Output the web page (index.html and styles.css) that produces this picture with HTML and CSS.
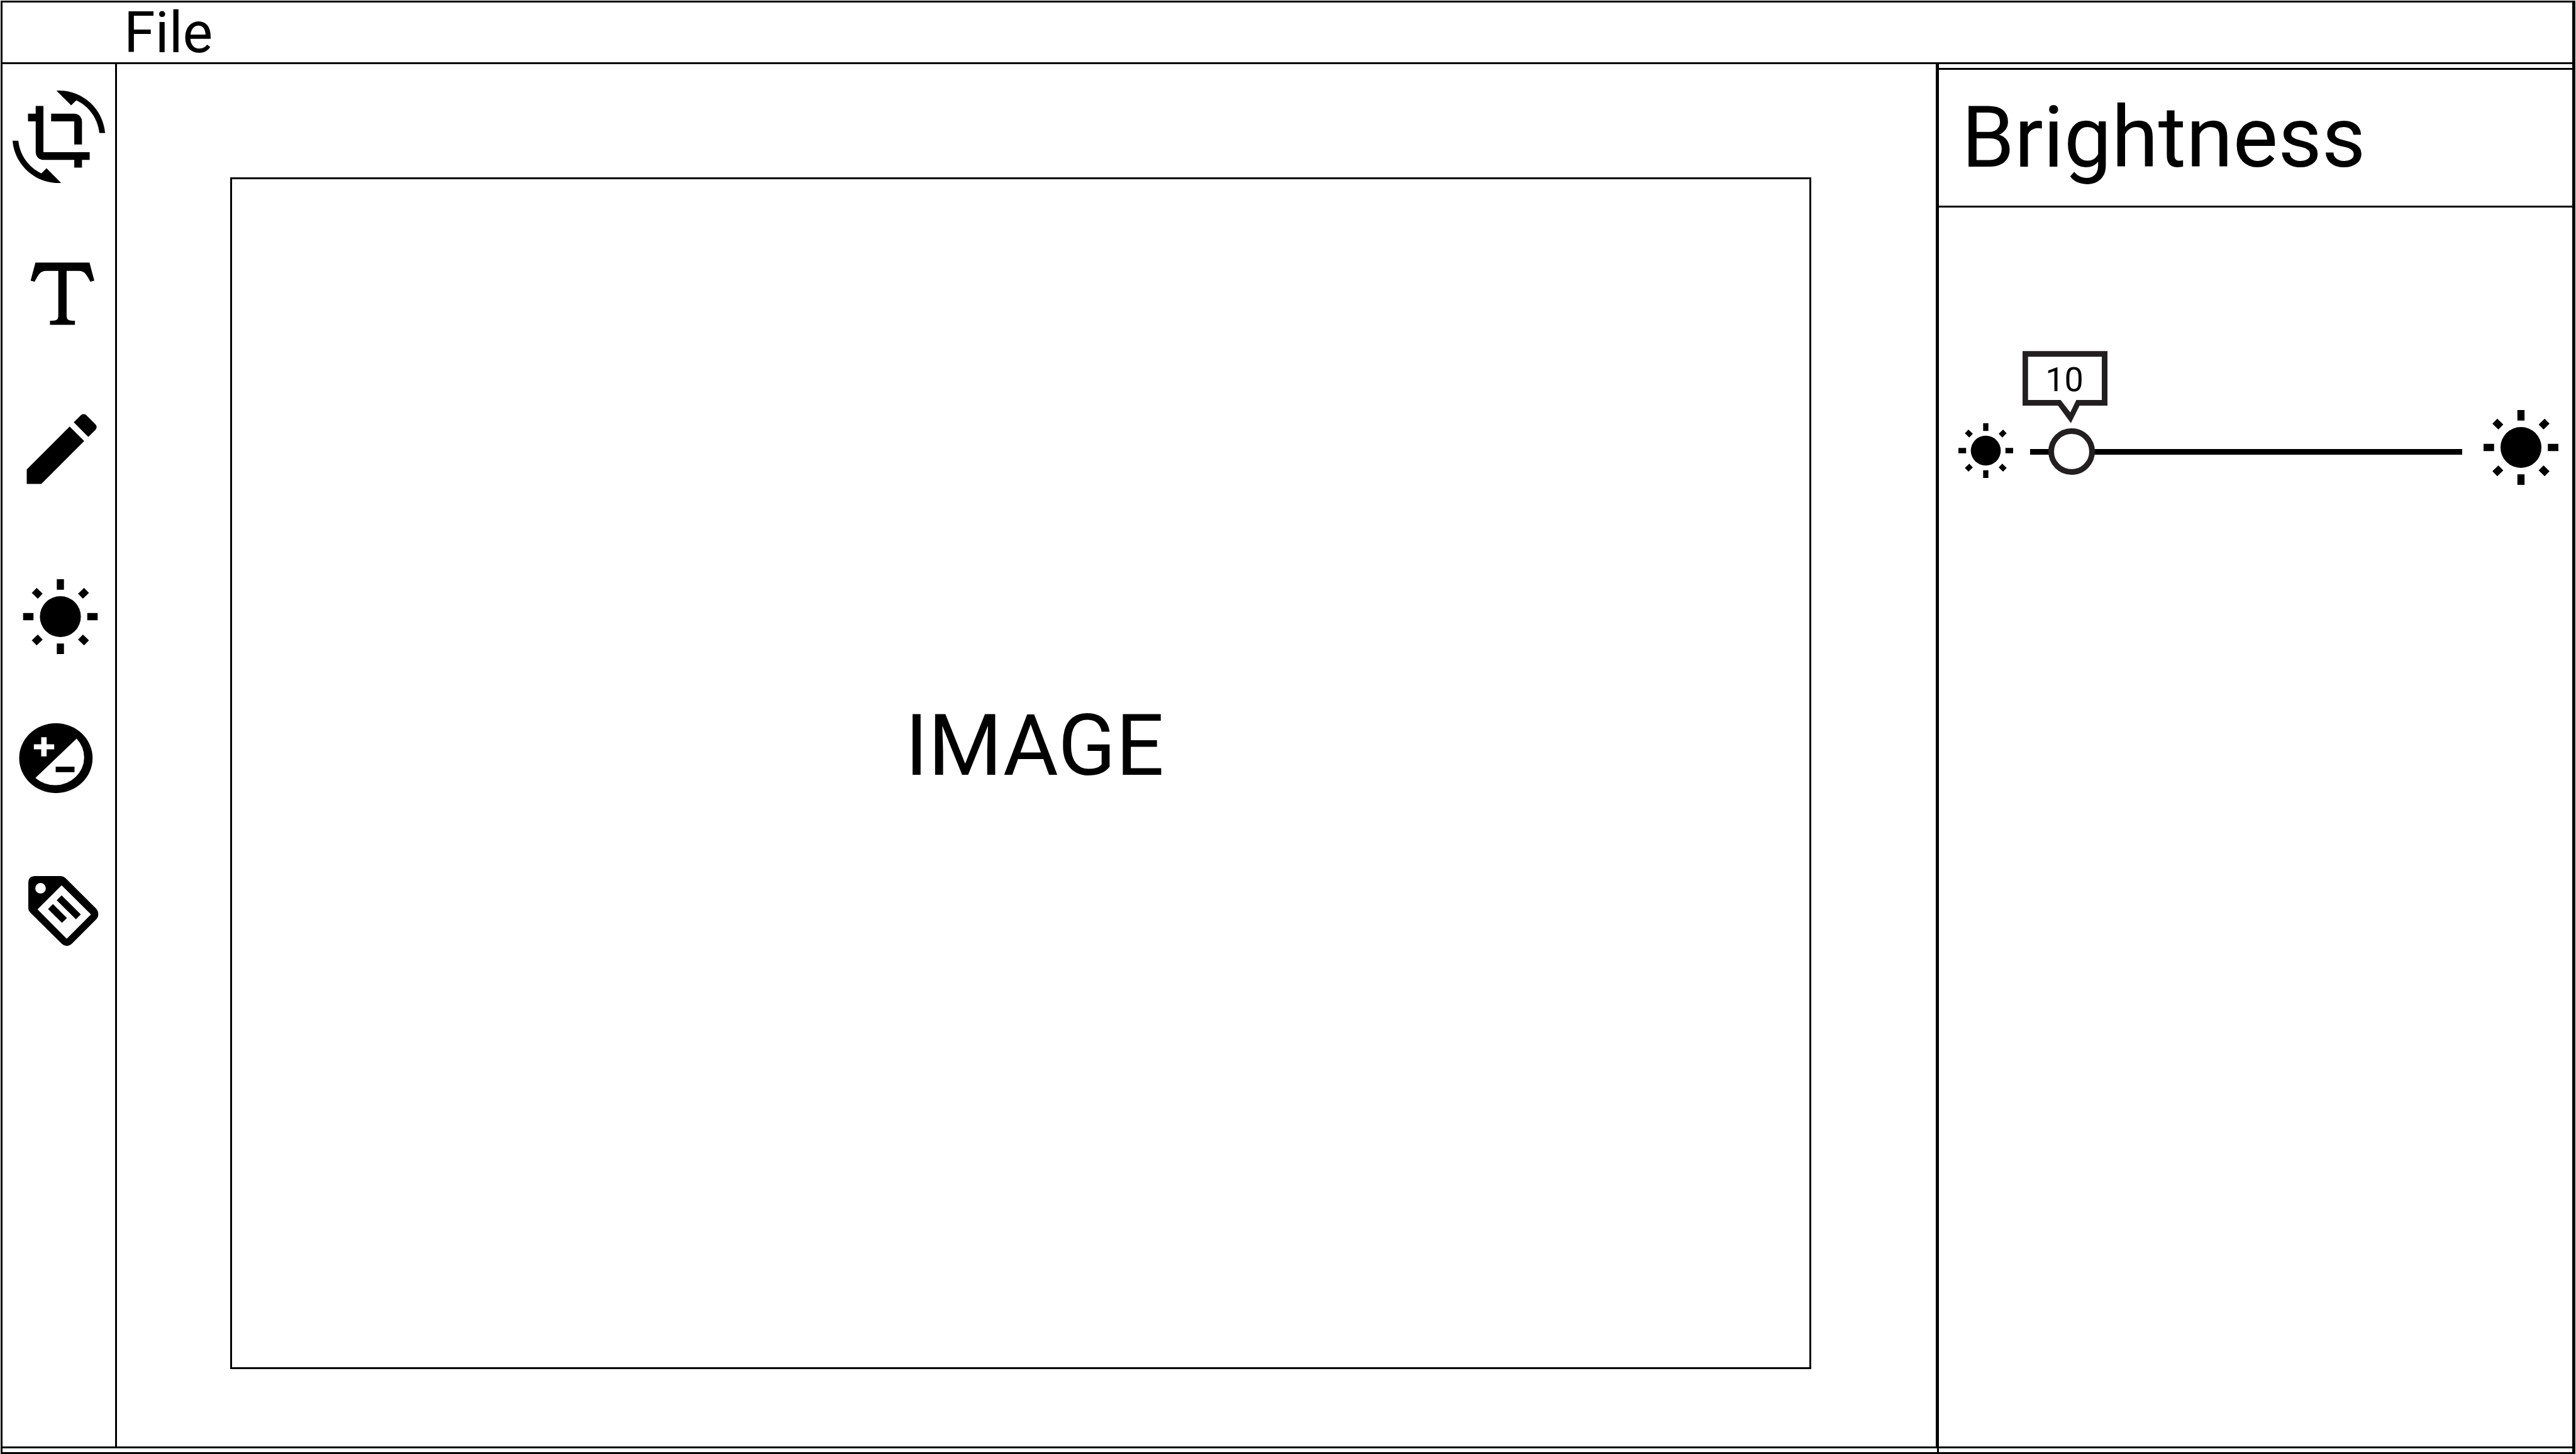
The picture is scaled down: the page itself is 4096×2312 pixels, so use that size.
FILE: index.html
```html
<!DOCTYPE html>
<html lang="en">
<head>
  <meta charset="utf-8">
  <title>Image editor</title>
  <link rel="stylesheet" href="styles.css">
</head>
<body>
  <svg class="symbols" aria-hidden="true">
    <symbol id="sun" viewBox="-199 -199 398 398">
      <circle r="109"/>
      <path d="M-19-199h38v56h-38zM-19 143h38v56h-38zM-199-19h56v38h-56zM143-19h56v38h-56z"/>
      <path d="M-152-126l26-27 32 31-26 27zM152-126l-26-27-32 31 26 27zM-152 126l26 27 32-31-26-27zM152 126l-26 27-32-31 26-27z"/>
    </symbol>
  </svg>

  <div class="app">
    <header class="menubar">
      <button class="menu" type="button">File</button>
    </header>

    <div class="workspace">
      <nav class="tools" aria-label="Tools">
        <button class="tool" type="button" aria-label="Crop and rotate">
          <svg width="179" height="147" viewBox="0 0 179 147"><g transform="translate(16 0) scale(6.13)"><path d="M7.47 21.49C4.2 19.93 1.86 16.76 1.5 13H0c.51 6.16 5.66 11 11.95 11 .23 0 .44-.02.66-.03L8.8 20.15l-1.33 1.34zM12.05 0c-.23 0-.44.02-.66.04l3.81 3.81 1.33-1.33C19.8 4.07 22.14 7.24 22.5 11H24c-.51-6.16-5.66-11-11.95-11zM16 14h2V8c0-1.11-.9-2-2-2h-6v2h6v6zm-8 2V4H6v2H4v2h2v8c0 1.1.89 2 2 2h8v2h2v-2h2v-2H8z"/></g></svg>
        </button>
        <button class="tool" type="button" aria-label="Text">
          <svg width="179" height="159" viewBox="0 0 179 159"><g transform="translate(16 0) scale(6.61)"><path d="M18.5 4l1.16 4.35-.96.26c-.45-.87-.91-1.74-1.44-2.18C16.73 6 16.11 6 15.5 6H13v10.5c0 .5 0 1 .33 1.25.34.25 1 .25 1.67.25v1H9v-1c.67 0 1.33 0 1.67-.25.33-.25.33-.75.33-1.25V6H8.5c-.61 0-1.23 0-1.76.43-.53.44-.99 1.31-1.44 2.18l-.96-.26L5.5 4h13z"/></g></svg>
        </button>
        <button class="tool" type="button" aria-label="Draw">
          <svg width="179" height="148" viewBox="0 0 179 148"><g transform="translate(20 0) scale(6.17)"><path d="M20.71 7.04c.39-.39.39-1.04 0-1.41l-2.34-2.34c-.37-.39-1.02-.39-1.41 0l-1.84 1.83 3.75 3.75M3 17.25V21h3.75L17.81 9.93l-3.75-3.75L3 17.25z"/></g></svg>
        </button>
        <button class="tool" type="button" aria-label="Brightness">
          <svg width="179" height="119" viewBox="0 0 179 119"><use href="#sun" x="32.5" width="119" height="119"/></svg>
        </button>
        <button class="tool" type="button" aria-label="Contrast">
          <svg width="179" height="111" viewBox="0 0 179 111"><g transform="translate(26.5 0) scale(.2993)"><path fill-rule="evenodd" d="M195 0a195 185.500 0 0 1 0 371a195 185.500 0 0 1 0-371zM305 82L86 291A155 148 0 0 0 305 82zM117 74v38H78v27h39v37h29v-37h40v-27h-40V74z"/><path d="M194 231h100v29H194z"/></g></svg>
        </button>
        <button class="tool" type="button" aria-label="Label">
          <svg width="179" height="111" viewBox="0 0 179 111"><g transform="translate(41 0) scale(.2993) translate(-151 -151)"><path fill-rule="evenodd" d="M188 151H321Q337 151 348 161L512 325Q523 337 523 355Q523 370 512 381L382 511Q370 522 356 522Q341 522 329 511L162 346Q151 335 151 322V188Q151 151 188 151zM188 216a28 28 0 0 0 56 0a28 28 0 0 0-56 0zM328 200L200 328L355 484L484 355z"/><path d="M328 254L430 355L404 381L302 280zM282 300L356 374L330 400L256 326z"/></g></svg>
        </button>
      </nav>

      <main class="canvas">
        <div class="picture">IMAGE</div>
      </main>

      <aside class="panel">
        <h1 class="panel-title"><label for="brightness">Brightness</label></h1>
        <div class="control">
          <svg class="sun-small" aria-hidden="true"><use href="#sun"/></svg>
          <div class="slider">
            <input class="range" id="brightness" type="range" min="0" max="215" value="10">
            <div class="callout">
              <svg class="callout-shape" viewBox="0 0 450 382" aria-hidden="true"><path fill-rule="evenodd" d="M0 0H450V289H302L256 382L188 289H0zM29 30V259H202L253 325L285 259H420V30z"/></svg>
              <output class="callout-value" for="brightness">10</output>
            </div>
          </div>
          <svg class="sun-large" aria-hidden="true"><use href="#sun"/></svg>
        </div>
      </aside>
    </div>

    <footer class="statusbar"><div class="status-cell"></div></footer>
  </div>
</body>
</html>
```

FILE: styles.css
```css
* {
  box-sizing: border-box;
}

body {
  display: flex;
  min-height: 100vh;
  margin: 0;
  padding: 1px 1px 0;
  background: #fff;
  color: #000;
  font-family: Roboto, sans-serif;
}

button {
  margin: 0;
  padding: 0;
  border: 0;
  background: none;
  color: inherit;
  font: inherit;
}

.symbols {
  position: absolute;
  width: 0;
  height: 0;
}

.app {
  display: flex;
  flex: 1;
  flex-direction: column;
  border: 3px solid #000;
  border-right-width: 5px;
}

.menubar {
  display: flex;
  padding: 3px 0 0 193px;
  border-bottom: 3px solid #000;
}

.menu {
  font-size: 90px;
  line-height: 92px;
}

.workspace {
  display: grid;
  flex: 1;
  grid-template-columns: 182px 1fr 1012px;
}

.tools {
  display: grid;
  grid-template-rows: 231px 275px 212px 321px 129px 356px;
  border-right: 3px solid #000;
}

.tool {
  display: flex;
  align-items: center;
}

.canvas {
  display: flex;
  padding: 180px 198px 123px 180px;
}

.picture {
  display: flex;
  flex: 1;
  align-items: center;
  justify-content: center;
  padding: 0 0 88px 44px;
  border: 3px solid #000;
  font-size: 135px;
}

.panel {
  padding-top: 6px;
  border-left: 5px solid #000;
}

.panel-title {
  margin: 0;
  padding-left: 36px;
  border: solid #000;
  border-width: 3px 0;
  font-size: 135px;
  font-weight: 400;
  line-height: 216px;
}

.control {
  display: flex;
  align-items: center;
  padding: 322px 22px 0 31px;
}

.sun-small {
  width: 87px;
  height: 87px;
}

.sun-large {
  width: 119px;
  height: 129px;
  padding-bottom: 10px;
}

.slider {
  position: relative;
  flex: 1;
  margin: 0 34px 0 27px;
}

.range {
  display: block;
  width: 100%;
  height: 77px;
  margin: 0;
  padding: 3px 0 0;
  appearance: none;
  background: none;
}

.range::-webkit-slider-runnable-track {
  height: 9px;
  background: #000;
}

.range::-webkit-slider-thumb {
  width: 74px;
  height: 74px;
  margin-top: -33px;
  appearance: none;
  border: 9px solid #231f20;
  border-radius: 50%;
  background: #fff;
}

.callout {
  position: absolute;
  bottom: calc(100% + 5px);
  left: -12px;
  width: 135px;
  height: 115px;
}

.callout-shape {
  position: absolute;
  inset: 0;
  width: 100%;
  height: 100%;
  fill: #231f20;
}

.callout-value {
  position: relative;
  display: block;
  padding-right: 2px;
  font-size: 54px;
  line-height: 92px;
  text-align: center;
}

.statusbar {
  display: flex;
  justify-content: flex-end;
  height: 9px;
  border-top: 3px solid #000;
}

.status-cell {
  width: 1010px;
  border-left: 3px solid #000;
}
```
